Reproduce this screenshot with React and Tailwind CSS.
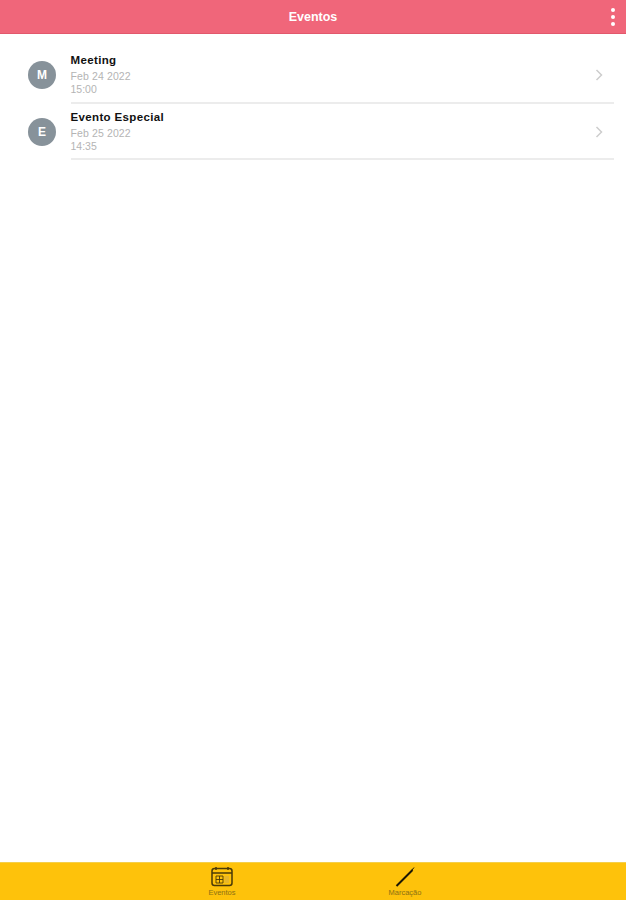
function Row({ letter, title, date, time, first }) {
  return (
    <div className={first ? "flex h-[58px] items-center" : "flex h-[56px] items-center"}>
      <div className="ml-[28px] flex h-[28px] w-[28px] shrink-0 items-center justify-center rounded-full bg-[#87929a] text-[12px] font-bold text-white">
        {letter}
      </div>
      <div className="ml-[14.5px] mr-[12px] flex h-full flex-1 items-center justify-between border-b-2 border-[#ececec]">
        <div className="flex flex-col">
          <span className="text-[11.5px] leading-[15px] font-bold tracking-[0.36px] text-[#111]">{title}</span>
          <span className="mt-[2px] text-[10.5px] leading-[13px] tracking-[0.12px] text-[#b4b4b4]">{date}</span>
          <span className="text-[10.5px] leading-[13px] text-[#b4b4b4]">{time}</span>
        </div>
        <svg width="10" height="14" viewBox="0 0 10 14" fill="none" stroke="#cdcdcd" strokeWidth="1.5" className="mr-[10px] mt-[1px]">
          <path d="M2.5 2 L7.5 7 L2.5 12" />
        </svg>
      </div>
    </div>
  );
}

export default function App() {
  return (
    <div className="flex h-[900px] w-[626px] flex-col bg-white font-['Liberation_Sans',sans-serif]">
      <header className="relative flex h-[34px] shrink-0 items-center justify-center border-b border-[#e2586c] bg-[#f0667a]">
        <span className="pt-[1px] text-[12.5px] leading-[16px] font-bold text-white">Eventos</span>
        <div className="absolute right-[11px] top-[8px] flex flex-col gap-[3px]">
          <span className="h-[4px] w-[4px] rounded-full bg-white" />
          <span className="h-[4px] w-[4px] rounded-full bg-white" />
          <span className="h-[4px] w-[4px] rounded-full bg-white" />
        </div>
      </header>
      <main className="flex-1 pt-[12px]">
        <Row first letter="M" title="Meeting" date="Feb 24 2022" time="15:00" />
        <Row letter="E" title="Evento Especial" date="Feb 25 2022" time="14:35" />
      </main>
      <footer className="flex h-[38px] shrink-0 border-t border-[#f5cf4a] bg-[#fec20b]">
        <div className="ml-[207px] flex w-[30px] flex-col items-center pt-[3px]">
          <svg width="22" height="21" viewBox="0 0 22 21" fill="none" stroke="#4a3a08" strokeWidth="1.5">
            <rect x="1" y="2.5" width="20" height="17" rx="2.5" />
            <path d="M1 7 H21" />
            <path d="M5 1 V4 M17 1 V4" />
            <path d="M5 10 H12 V17 H5 Z M8.5 10 V17 M5 13.5 H12" strokeWidth="0.9" />
            <path d="M13.5 10 H18 V17 H13.5 Z" fill="#e8b62a" stroke="none" />
          </svg>
          <span className="mt-[1px] text-[7.5px] leading-[9px] text-[#8c7114]">Eventos</span>
        </div>
        <div className="ml-[148px] flex w-[40px] flex-col items-center pt-[3px]">
          <svg width="22" height="21" viewBox="0 0 22 21" fill="none" stroke="#1c1705" strokeWidth="2">
            <path d="M2.5 20 L18.5 4" />
            <path d="M18 4 L20 1.5" strokeWidth="1" />
          </svg>
          <span className="mt-[1px] text-[7.5px] leading-[9px] text-[#8c7114]">Marcação</span>
        </div>
      </footer>
    </div>
  );
}
